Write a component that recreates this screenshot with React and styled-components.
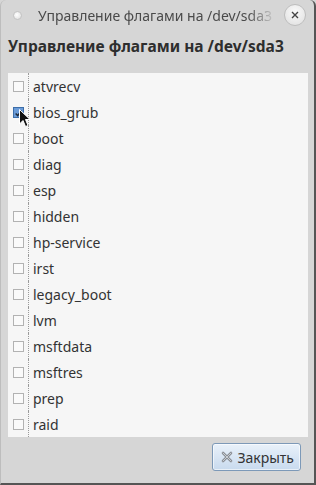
import styled, { createGlobalStyle } from "styled-components";

const GlobalStyle = createGlobalStyle`
  html, body {
    margin: 0;
    padding: 0;
    background: #d6d6d6;
  }
  body {
    font-family: "Noto Sans", "Open Sans", sans-serif;
  }
`;

const flags = [
  { name: "atvrecv" },
  { name: "bios_grub", checked: true },
  { name: "boot" },
  { name: "diag" },
  { name: "esp" },
  { name: "hidden" },
  { name: "hp-service" },
  { name: "irst" },
  { name: "legacy_boot" },
  { name: "lvm" },
  { name: "msftdata" },
  { name: "msftres" },
  { name: "prep" },
  { name: "raid" },
];

export default function App() {
  return (
    <>
      <GlobalStyle />
      <Window>
        <TitleBar>
          <MenuDot />
          <Title>Управление флагами на /dev/sda3</Title>
          <CloseCircle>
            <svg width="8" height="8" viewBox="0 0 8 8">
              <path d="M1 1L7 7M7 1L1 7" stroke="#444" strokeWidth="1.4" />
            </svg>
          </CloseCircle>
        </TitleBar>
        <Body>
          <Heading>Управление флагами на /dev/sda3</Heading>
          <List>
            {flags.map((flag) => (
              <Row key={flag.name}>
                <CheckCell>
                  <Box $checked={flag.checked}>
                    {flag.checked && (
                      <svg width="11" height="11" viewBox="0 0 11 11">
                        <path
                          d="M2 5.5L4.5 8L9.5 2"
                          stroke="#1e2a3a"
                          strokeWidth="1.8"
                          fill="none"
                        />
                      </svg>
                    )}
                  </Box>
                  {flag.checked && (
                    <Cursor width="12" height="19" viewBox="0 0 12 19">
                      <path
                        d="M0.5 0.5L0.5 15L4 11.5L6.5 17.5L9 16.5L6.5 10.5L11 10.5Z"
                        fill="#111"
                        stroke="#fff"
                        strokeWidth="1"
                      />
                    </Cursor>
                  )}
                </CheckCell>
                <Label>{flag.name}</Label>
              </Row>
            ))}
          </List>
          <Footer>
            <CloseButton>
              <svg width="12" height="12" viewBox="0 0 12 12">
                <path
                  d="M2 2L10 10M10 2L2 10"
                  stroke="#8a8f96"
                  strokeWidth="2.6"
                  strokeLinecap="round"
                />
                <path
                  d="M2 2L10 10M10 2L2 10"
                  stroke="#c9cdd2"
                  strokeWidth="1"
                  strokeLinecap="round"
                />
              </svg>
              Закрыть
            </CloseButton>
          </Footer>
        </Body>
      </Window>
    </>
  );
}

const Window = styled.div`
  width: 316px;
  height: 485px;
  box-sizing: border-box;
  background: #d6d6d6;
  border-right: 2px solid #555;
  border-bottom: 2px solid #555;
  border-left: 1px solid #bdbdbd;
  border-radius: 6px 6px 0 0;
  display: flex;
  flex-direction: column;
  overflow: hidden;
`;

const TitleBar = styled.div`
  height: 30px;
  display: flex;
  align-items: center;
  padding: 0 8px 0 12px;
  flex-shrink: 0;
`;

const MenuDot = styled.span`
  width: 7px;
  height: 7px;
  border-radius: 50%;
  background: radial-gradient(circle at 40% 40%, #fff, #dcdcdc);
  border: 1px solid #c4c4c4;
  margin-right: 16px;
`;

const Title = styled.div`
  flex: 1;
  font-size: 14px;
  color: #4a4a4a;
  white-space: nowrap;
  overflow: hidden;
  -webkit-mask-image: linear-gradient(to right, #000 88%, transparent 100%);
  mask-image: linear-gradient(to right, #000 88%, transparent 100%);
`;

const CloseCircle = styled.span`
  width: 20px;
  height: 20px;
  border-radius: 50%;
  border: 1px solid #bdbdbd;
  background: radial-gradient(circle at 50% 35%, #fafafa, #dedede);
  display: flex;
  align-items: center;
  justify-content: center;
  margin-left: 8px;
`;

const Body = styled.div`
  flex: 1;
  display: flex;
  flex-direction: column;
  padding: 0 6px 0 7px;
`;

const Heading = styled.h1`
  margin: 4px 0 0;
  height: 39px;
  font-size: 15.5px;
  font-weight: bold;
  color: #2e2e2e;
  line-height: 24px;
`;

const List = styled.div`
  background: #f6f6f6;
  display: flex;
  flex-direction: column;
`;

const Row = styled.div`
  height: 26px;
  display: flex;
  align-items: center;
`;

const CheckCell = styled.div`
  position: relative;
  box-sizing: border-box;
  width: 21px;
  height: 26px;
  display: flex;
  align-items: center;
  padding-left: 5px;
  border-right: 1px dotted #9a9a9a;
`;

const Box = styled.span`
  width: 11px;
  height: 11px;
  box-sizing: border-box;
  border: 1px solid ${(p) => (p.$checked ? "#3c6da8" : "#b2b2b2")};
  background: ${(p) => (p.$checked ? "#6a9bd8" : "#fafafa")};
  display: flex;
`;

const Cursor = styled.svg`
  position: absolute;
  left: 11px;
  top: 10px;
`;

const Label = styled.span`
  padding-left: 4px;
  font-size: 14px;
  color: #333;
`;

const Footer = styled.div`
  display: flex;
  justify-content: flex-end;
  padding: 6px 7px 0 0;
`;

const CloseButton = styled.button`
  height: 28px;
  padding: 0 6px 0 8px;
  display: flex;
  align-items: center;
  gap: 4px;
  font-family: "Noto Sans", "Open Sans", sans-serif;
  font-size: 14px;
  color: #333;
  border: 1px solid #7d99b8;
  border-radius: 3px;
  background: linear-gradient(#e9f1fa, #c8daee);
  box-shadow: inset 0 0 0 1px rgba(255, 255, 255, 0.6);
`;
